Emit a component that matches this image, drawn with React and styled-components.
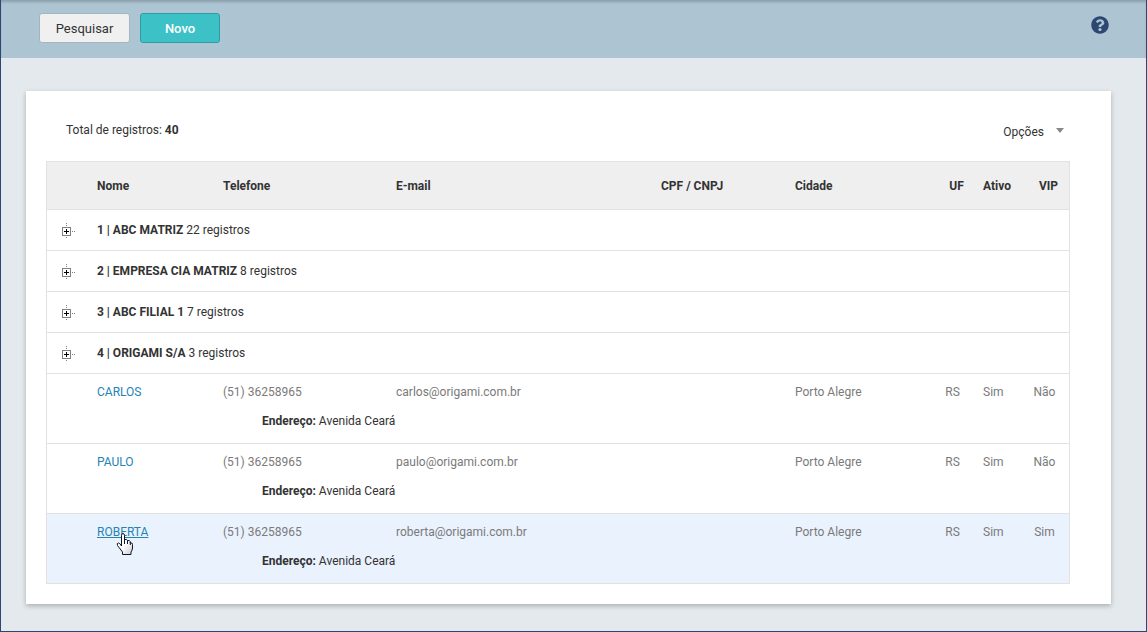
import React from 'react';
import styled, { createGlobalStyle, css } from 'styled-components';
import { FaQuestionCircle } from 'react-icons/fa';

const GlobalStyle = createGlobalStyle`
  *, *::before, *::after { box-sizing: border-box; }
  body {
    margin: 0;
    background: #e3e9ec;
    color: #333;
    font: 12px/18px Roboto, "Liberation Sans", sans-serif;
  }
  button { font: inherit; color: inherit; cursor: pointer; }
`;

const Page = styled.div`
  min-height: 100vh;
  border: solid #2c4770;
  border-width: 0 1px 1px;
  padding-bottom: 24px;
`;

const Toolbar = styled.header`
  display: flex;
  align-items: flex-start;
  gap: 10px;
  height: 58px;
  padding: 13px 37px 0 38px;
  background: #adc5d3;
  box-shadow: inset 0 3px 3px -1px rgba(0, 0, 0, 0.2);
`;

const ActionButton = styled.button`
  min-width: 91px;
  height: 30px;
  padding: 2px 15px 0;
  border: 1px solid #a3b5c1;
  border-radius: 3px;
  background: #f0f0f0;
  font-size: 13px;
  ${({ $primary }) => $primary && css`
    min-width: 80px;
    border-color: #2f9da1;
    background: #3cc1c6;
    color: #fff;
    font-weight: 500;
  `}
`;

const HelpButton = styled.button`
  display: flex;
  margin-left: auto;
  padding: 3px 0;
  border: 0;
  background: none;
  color: #2c4770;
`;

const Card = styled.main`
  margin: 33px 35px 0 25px;
  padding: 0 41px 20px 20px;
  background: #fff;
  box-shadow: 0 2px 5px rgba(0, 0, 0, 0.25);
`;

const Summary = styled.div`
  display: flex;
  align-items: center;
  justify-content: space-between;
  height: 70px;
  padding: 8px 6px 0 20px;
`;

const Total = styled.p`
  margin: 0;
`;

const OptionsButton = styled.button`
  display: flex;
  align-items: center;
  gap: 12px;
  padding: 4px 0 0;
  border: 0;
  background: none;
`;

const Caret = styled.span`
  margin-bottom: 4px;
  border: solid transparent;
  border-width: 5px 4px 0;
  border-top-color: #888;
`;

const Table = styled.table`
  width: 100%;
  table-layout: fixed;
  border: 1px solid #e2e2e2;
  border-collapse: separate;
  border-spacing: 0;
`;

const Col = styled.col`
  width: ${({ $width }) => ($width ? `${$width}px` : 'auto')};
`;

const HeadCell = styled.th`
  height: 48px;
  padding: 0 0 0 ${({ $center }) => ($center ? 8 : 10)}px;
  border-bottom: 1px solid #e2e2e2;
  background: #efefef;
  font-weight: 700;
  text-align: ${({ $center }) => ($center ? 'center' : 'left')};
  white-space: nowrap;
`;

const GroupCell = styled.td`
  height: 41px;
  padding: 0 0 0 ${({ $toggle }) => ($toggle ? 12 : 10)}px;
  border-bottom: 1px solid #e2e2e2;
`;

const ToggleButton = styled.button`
  display: flex;
  padding: 0;
  border: 0;
  background: none;
`;

const Record = styled.tbody`
  background: ${({ $hovered }) => ($hovered ? '#eaf2fe' : '#fff')};
  &:not(:last-child) > tr:last-child > td { border-bottom: 1px solid #e2e2e2; }
  a { text-decoration: ${({ $hovered }) => ($hovered ? 'underline' : 'none')}; }
`;

const DataCell = styled.td`
  position: relative;
  height: 36px;
  padding: 0 0 0 ${({ $center }) => ($center ? 0 : 10)}px;
  color: #7a7a7a;
  text-align: ${({ $center }) => ($center ? 'center' : 'left')};
`;

const AddressCell = styled.td`
  padding: 2px 0 13px 215px;
`;

const NameLink = styled.a`
  color: #2583b5;
`;

const Pointer = styled.svg`
  position: absolute;
  top: 19px;
  left: 29px;
  pointer-events: none;
`;

const columns = [
  { label: '', width: 40 },
  { label: 'Nome', width: 126 },
  { label: 'Telefone', width: 173 },
  { label: 'E-mail' },
  { label: 'CPF / CNPJ', width: 134 },
  { label: 'Cidade', width: 147 },
  { label: 'UF', width: 41, center: true },
  { label: 'Ativo', width: 47 },
  { label: 'VIP', width: 49, center: true },
];

const groups = [
  { name: '1 | ABC MATRIZ', count: 22 },
  { name: '2 | EMPRESA CIA MATRIZ', count: 8 },
  { name: '3 | ABC FILIAL 1', count: 7 },
  { name: '4 | ORIGAMI S/A', count: 3 },
];

const records = [
  { name: 'CARLOS', email: 'carlos@origami.com.br', vip: 'Não' },
  { name: 'PAULO', email: 'paulo@origami.com.br', vip: 'Não' },
  { name: 'ROBERTA', email: 'roberta@origami.com.br', vip: 'Sim', hovered: true },
];

const ExpandIcon = () => (
  <svg width="16" height="15" viewBox="0 0 16 15" shapeRendering="crispEdges" aria-hidden="true">
    <rect x="3.5" y="4.5" width="8" height="8" fill="#fff" stroke="#808080" />
    <path d="M5 8.5h5M7.5 6v5" stroke="#000" />
    <path d="M7 .5h1M7 2.5h1M7 14.5h1M13 8.5h1M15 8.5h1" stroke="#808080" />
  </svg>
);

const HandCursor = () => (
  <Pointer width="18" height="23" viewBox="0 0 18 23" aria-hidden="true">
    <defs>
      <linearGradient id="hand" x1="0" y1="0" x2="1" y2="1">
        <stop offset="0.5" stopColor="#fff" />
        <stop offset="1" stopColor="#ccc" />
      </linearGradient>
    </defs>
    <path
      d="M5.500 13V2.500q0-2 1.500-2t1.500 2V8V6.500q2.500-.8 3 1.200V9V7.500q2.300-.5 2.800 1.200V10q2.200-.7 2.200 1.500V15q0 2-1.500 4v2.500H6.500V19L1.500 12.500Q.5 10 2.500 10q1.200 0 3 3Z"
      fill="url(#hand)"
      stroke="#111827"
    />
    <path d="M8.500 7v4M11.500 8v3M14.300 9v3" stroke="#111827" />
  </Pointer>
);

export default function App() {
  return (
    <>
      <GlobalStyle />
      <Page>
        <Toolbar>
          <ActionButton type="button">Pesquisar</ActionButton>
          <ActionButton type="button" $primary>Novo</ActionButton>
          <HelpButton type="button" aria-label="Ajuda"><FaQuestionCircle size={18} /></HelpButton>
        </Toolbar>
        <Card>
          <Summary>
            <Total>Total de registros: <b>40</b></Total>
            <OptionsButton type="button">Opções<Caret /></OptionsButton>
          </Summary>
          <Table>
            <colgroup>
              {columns.map((c, i) => <Col key={i} $width={c.width} />)}
            </colgroup>
            <thead>
              <tr>
                {columns.map((c, i) => <HeadCell key={i} $center={c.center}>{c.label}</HeadCell>)}
              </tr>
            </thead>
            <tbody>
              {groups.map((g) => (
                <tr key={g.name}>
                  <GroupCell $toggle>
                    <ToggleButton type="button" aria-label={`Expandir ${g.name}`}><ExpandIcon /></ToggleButton>
                  </GroupCell>
                  <GroupCell colSpan={8}><b>{g.name}</b> {g.count} registros</GroupCell>
                </tr>
              ))}
            </tbody>
            {records.map((r) => (
              <Record key={r.name} $hovered={r.hovered}>
                <tr>
                  <DataCell />
                  <DataCell>
                    <NameLink href="#">{r.name}</NameLink>
                    {r.hovered && <HandCursor />}
                  </DataCell>
                  <DataCell>(51) 36258965</DataCell>
                  <DataCell>{r.email}</DataCell>
                  <DataCell />
                  <DataCell>Porto Alegre</DataCell>
                  <DataCell $center>RS</DataCell>
                  <DataCell>Sim</DataCell>
                  <DataCell $center>{r.vip}</DataCell>
                </tr>
                <tr>
                  <AddressCell colSpan={9}><b>Endereço:</b> Avenida Ceará</AddressCell>
                </tr>
              </Record>
            ))}
          </Table>
        </Card>
      </Page>
    </>
  );
}
